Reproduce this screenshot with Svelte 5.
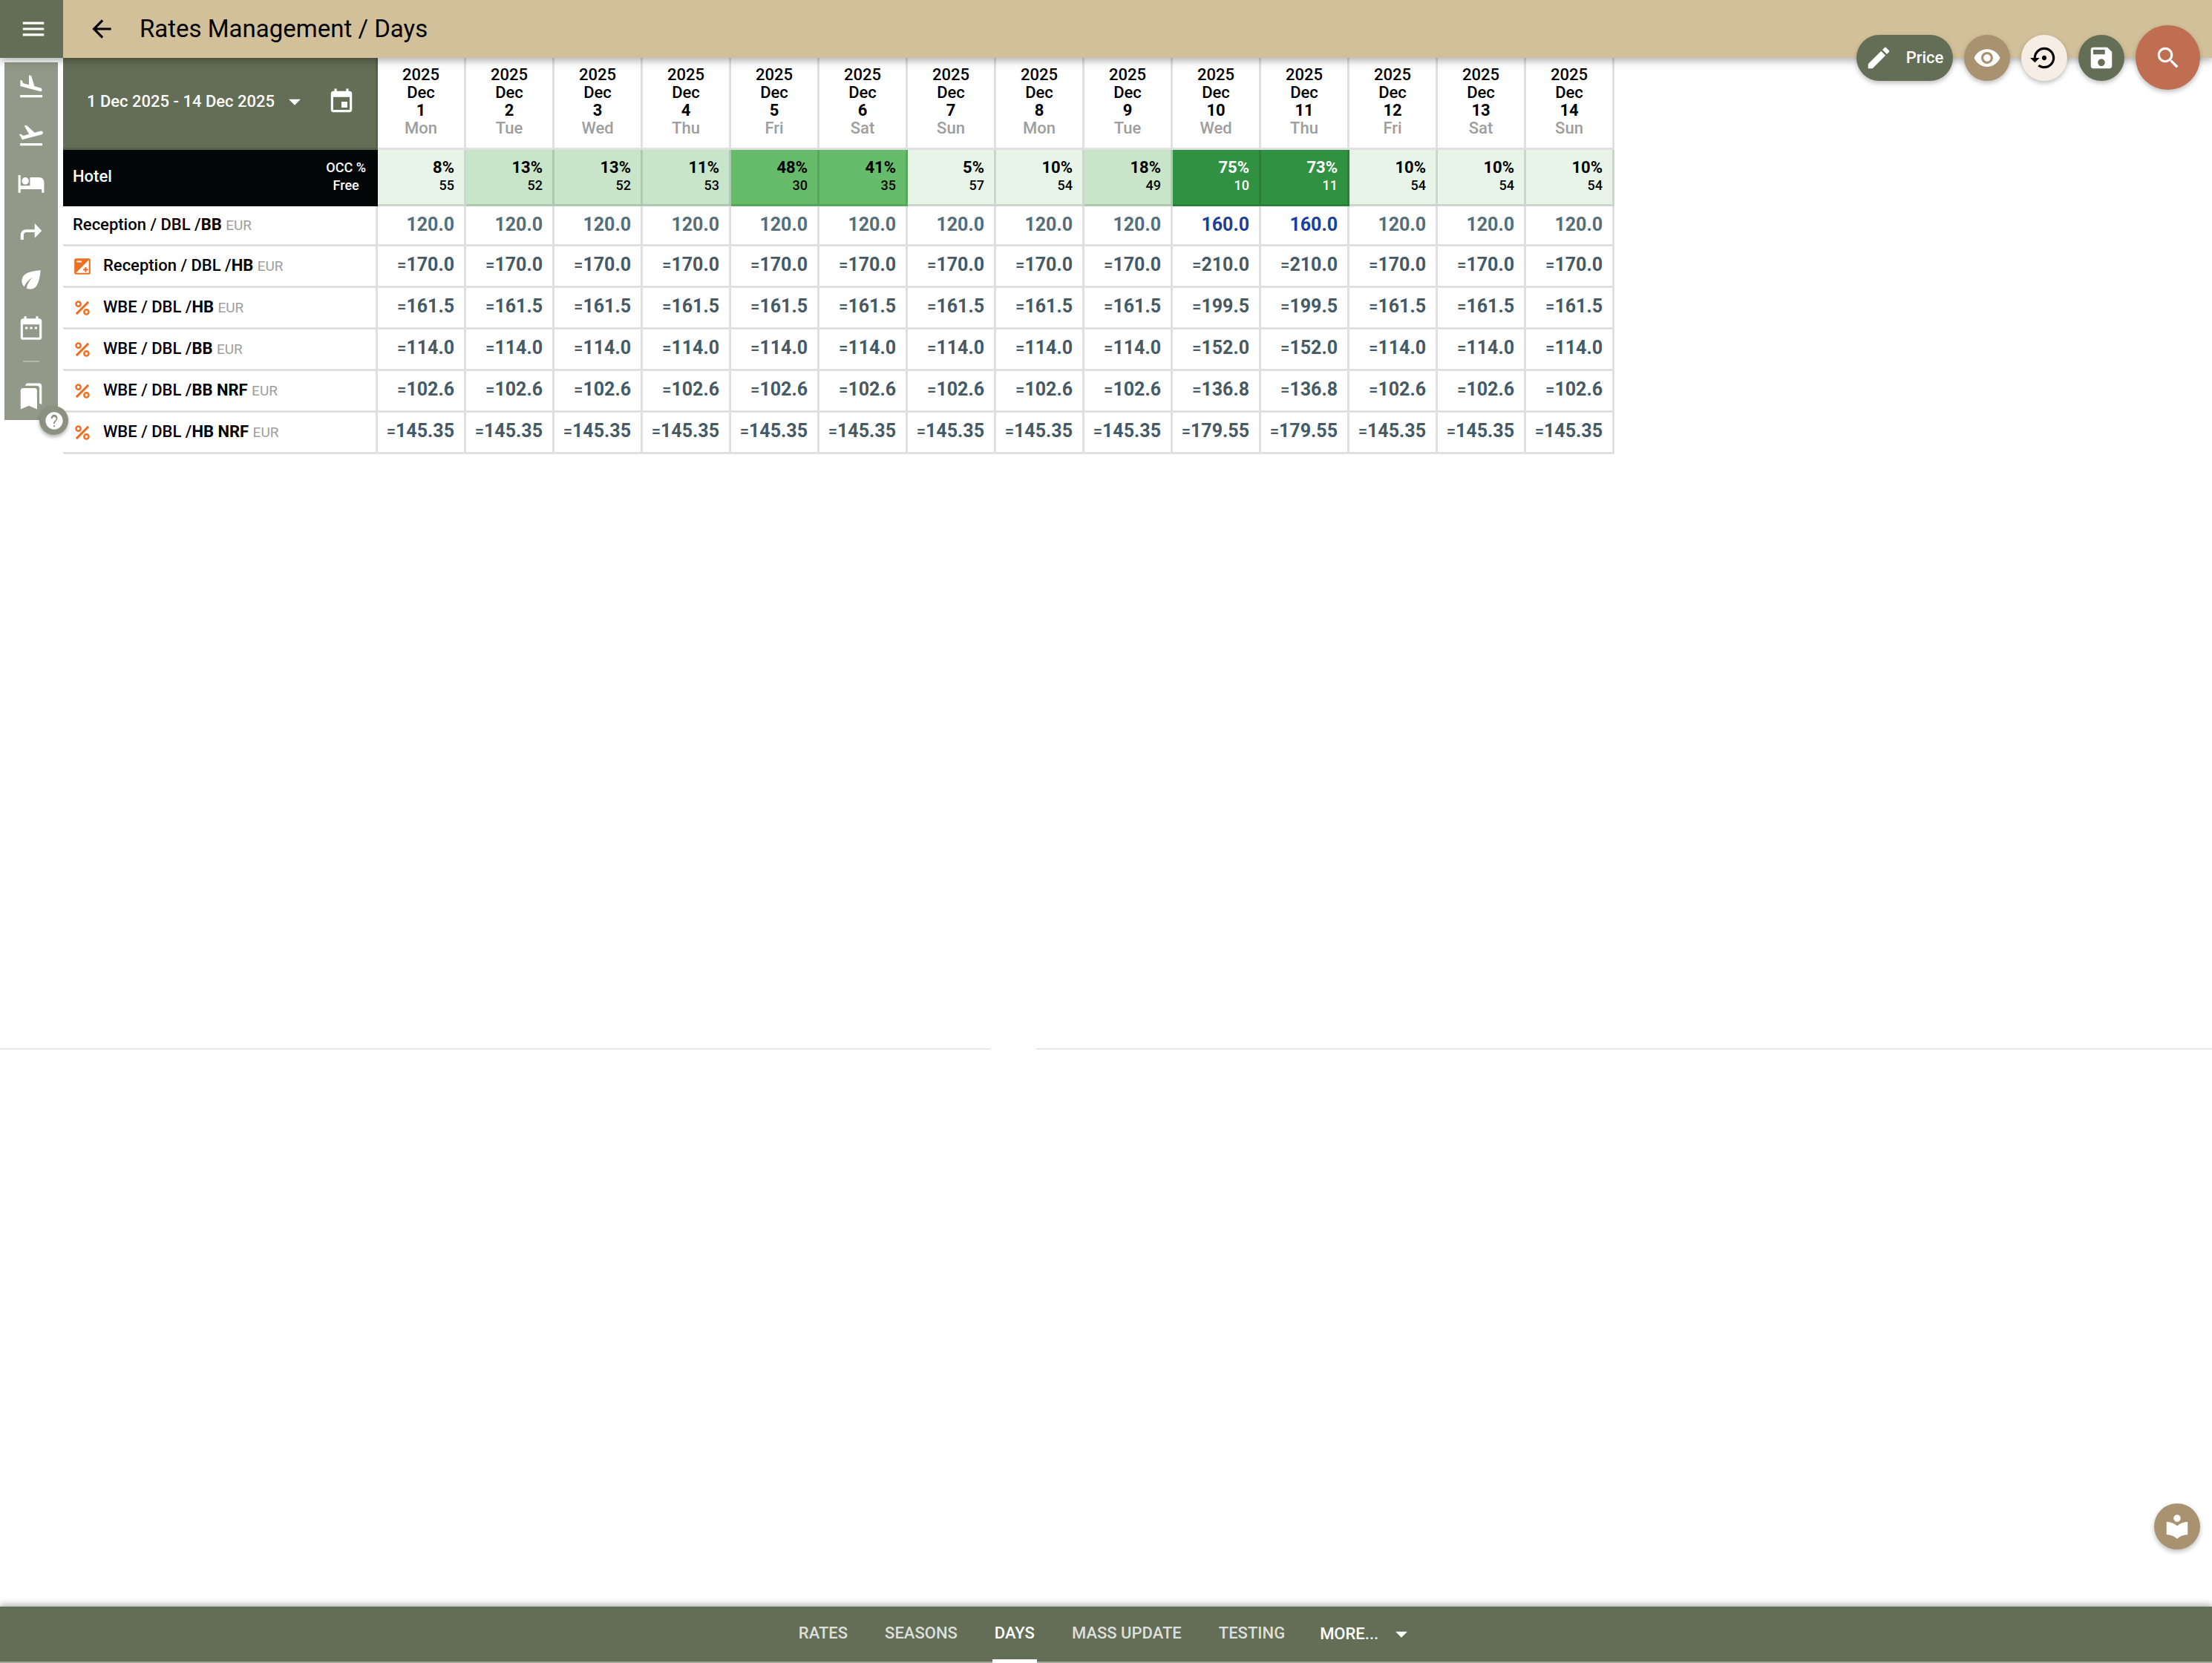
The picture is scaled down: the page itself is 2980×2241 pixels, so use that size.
<script>
  const weekdays = ['Mon', 'Tue', 'Wed', 'Thu', 'Fri', 'Sat', 'Sun'];
  const occupancy = [
    [8, 55], [13, 52], [13, 52], [11, 53], [48, 30], [41, 35], [5, 57],
    [10, 54], [18, 49], [75, 10], [73, 11], [10, 54], [10, 54], [10, 54]
  ];
  const level = (occ) => (occ > 60 ? 'full' : occ > 30 ? 'high' : occ > 10 ? 'mid' : 'low');
  const days = occupancy.map(([occ, free], i) => ({
    date: i + 1,
    weekday: weekdays[i % 7],
    occ,
    free,
    peak: occ > 60,
    level: level(occ)
  }));

  const rates = [
    { name: 'Reception / DBL /', board: 'BB', icon: null, base: '120.0', peak: '160.0' },
    { name: 'Reception / DBL /', board: 'HB', icon: 'exposure', base: '170.0', peak: '210.0' },
    { name: 'WBE / DBL /', board: 'HB', icon: 'percent', base: '161.5', peak: '199.5' },
    { name: 'WBE / DBL /', board: 'BB', icon: 'percent', base: '114.0', peak: '152.0' },
    { name: 'WBE / DBL /', board: 'BB NRF', icon: 'percent', base: '102.6', peak: '136.8' },
    { name: 'WBE / DBL /', board: 'HB NRF', icon: 'percent', base: '145.35', peak: '179.55' }
  ];

  const tabs = ['Rates', 'Seasons', 'Days', 'Mass update', 'Testing'];

  const shortcuts = [
    { label: 'Arrivals', icon: 'landing' },
    { label: 'Departures', icon: 'takeoff' },
    { label: 'Rooms', icon: 'bed' },
    { label: 'Forward', icon: 'turn' },
    { label: 'Housekeeping', icon: 'leaf' },
    { label: 'Calendar', icon: 'range' }
  ];

  const paths = {
    menu: 'M3 18h18v-2H3v2zm0-5h18v-2H3v2zm0-7v2h18V6H3z',
    back: 'M20 11H7.83l5.59-5.59L12 4l-8 8 8 8 1.41-1.41L7.83 13H20v-2z',
    landing:
      'M2.5 19h19v2h-19v-2zm7.18-5.73l4.35 1.16 5.31 1.42c.8.21 1.62-.26 1.84-1.06.21-.8-.26-1.62-1.06-1.84l-5.31-1.42-2.76-9.02L10.12 2v8.28L5.15 8.95l-.93-2.32-1.45-.39v5.17l1.6.43 5.31 1.43z',
    takeoff:
      'M2.5 19h19v2h-19v-2zm19.57-9.36c-.21-.8-1.04-1.28-1.84-1.06L14.92 10l-6.9-6.43-1.93.51 4.14 7.17-4.97 1.33-1.97-1.54-1.45.39 1.82 3.16.77 1.33 1.6-.43 5.31-1.42 4.35-1.16L21 11.49c.81-.23 1.28-1.05 1.07-1.85z',
    bed: 'M7 13c1.66 0 3-1.34 3-3S8.66 7 7 7s-3 1.34-3 3 1.34 3 3 3zm12-6h-8v7H3V5H1v15h2v-3h18v3h2v-9c0-2.21-1.79-4-4-4z',
    turn: 'M3 19V15C3 12.2 5 10.3 7.8 10.3H15V5L21 11.3L15 17.5V12.7H8C6.5 12.7 5.6 13.6 5.6 15V19Z',
    leaf: 'M6.05 8.05a7.001 7.001 0 0 0-.02 9.88c1.47-3.4 4.09-6.24 7.36-7.93A15.952 15.952 0 0 0 8 19.32c2.6 1.23 5.8.78 7.95-1.37C19.43 14.47 20 4 20 4S9.53 4.57 6.05 8.05z',
    range:
      'M9 11H7v2h2v-2zm4 0h-2v2h2v-2zm4 0h-2v2h2v-2zm2-7h-1V2h-2v2H8V2H6v2H5c-1.11 0-1.99.9-1.99 2L3 20c0 1.1.89 2 2 2h14c1.1 0 2-.9 2-2V6c0-1.1-.9-2-2-2zm0 16H5V9h14v11z',
    bookmarks:
      'M19 18l2 1V3c0-1.1-.9-2-2-2H8.99C7.89 1 7 1.9 7 3h10c1.1 0 2 .9 2 2v13zM15 5H5c-1.1 0-2 .9-2 2v16l7-3 7 3V7c0-1.1-.9-2-2-2z',
    event:
      'M17 12h-5v5h5v-5zM16 1v2H8V1H6v2H5c-1.11 0-1.99.9-1.99 2L3 19c0 1.1.89 2 2 2h14c1.1 0 2-.9 2-2V5c0-1.1-.9-2-2-2h-1V1h-2zm3 18H5V8h14v11z',
    down: 'M7 10l5 5 5-5z',
    pencil:
      'M3 17.25V21h3.75L17.81 9.94l-3.75-3.75L3 17.25zM20.71 7.04c.39-.39.39-1.02 0-1.41l-2.34-2.34c-.39-.39-1.02-.39-1.41 0l-1.83 1.83 3.75 3.75 1.83-1.83z',
    eye: 'M12 4.5C7 4.5 2.73 7.61 1 12c1.73 4.39 6 7.5 11 7.5s9.27-3.11 11-7.5c-1.73-4.39-6-7.5-11-7.5zM12 17c-2.76 0-5-2.24-5-5s2.24-5 5-5 5 2.24 5 5-2.24 5-5 5zm0-8c-1.66 0-3 1.34-3 3s1.34 3 3 3 3-1.34 3-3-1.34-3-3-3z',
    restore:
      'M14 12c0-1.1-.9-2-2-2s-2 .9-2 2 .9 2 2 2 2-.9 2-2zm-2-9c-4.97 0-9 4.03-9 9H0l4 4 4-4H5c0-3.87 3.13-7 7-7s7 3.13 7 7-3.13 7-7 7c-1.51 0-2.91-.49-4.06-1.3l-1.42 1.44C8.04 20.3 9.94 21 12 21c4.97 0 9-4.03 9-9s-4.03-9-9-9z',
    save: 'M17 3H5c-1.11 0-2 .9-2 2v14c0 1.1.89 2 2 2h14c1.1 0 2-.9 2-2V7l-4-4zm-5 16c-1.66 0-3-1.34-3-3s1.34-3 3-3 3 1.34 3 3-1.34 3-3 3zm3-10H5V5h10v4z',
    search:
      'M15.5 14h-.79l-.28-.27C15.41 12.59 16 11.11 16 9.5 16 5.91 13.09 3 9.5 3S3 5.91 3 9.5 5.91 16 9.5 16c1.61 0 3.09-.59 4.23-1.57l.27.28v.79l5 4.99L20.49 19l-4.99-5zm-6 0C7.01 14 5 11.99 5 9.5S7.01 5 9.5 5 14 7.01 14 9.5 11.99 14 9.5 14z',
    library:
      'M12 11.55C9.64 9.35 6.48 8 3 8v11c3.48 0 6.64 1.35 9 3.55 2.36-2.19 5.52-3.55 9-3.55V8c-3.48 0-6.64 1.35-9 3.55zM12 8c1.66 0 3-1.34 3-3s-1.34-3-3-3-3 1.34-3 3 1.34 3 3 3z',
    help: 'M12 2C6.48 2 2 6.48 2 12s4.48 10 10 10 10-4.48 10-10S17.52 2 12 2zm.8 17h-1.6v-1.6h1.6V19zm1.9-7.2l-.8.8c-.7.75-1.1 1.4-1.1 2.9h-1.6v-.4c0-1.1.45-2.1 1.2-2.8l1.2-1.25c.4-.3.6-.8.6-1.35 0-1.2-1-2.1-2.2-2.1s-2.2.9-2.2 2.1H8.2C8.2 6.6 9.9 5 12 5s3.8 1.6 3.8 3.7c0 1-.4 1.9-1.1 3.1z',
    exposure:
      'M15 17v2h2v-2h2v-2h-2v-2h-2v2h-2v2h2zm5-15H4c-1.1 0-2 .9-2 2v16c0 1.1.9 2 2 2h16c1.1 0 2-.9 2-2V4c0-1.1-.9-2-2-2zM5 5h6v2H5V5zm15 15H4L20 4v16z',
    percent:
      'M18.5 3.5L20.5 5.5L5.5 20.5L3.5 18.5ZM7 3a4 4 0 1 0 0 8a4 4 0 0 0 0-8zm0 2.3a1.7 1.7 0 1 1 0 3.4a1.7 1.7 0 0 1 0-3.4zM17 13a4 4 0 1 0 0 8a4 4 0 0 0 0-8zm0 2.3a1.7 1.7 0 1 1 0 3.4a1.7 1.7 0 0 1 0-3.4z'
  };
</script>

{#snippet icon(name)}
  <svg class="icon" viewBox="0 0 24 24" aria-hidden="true"><path d={paths[name]} /></svg>
{/snippet}

<div class="app">
  <header>
    <button class="menu" aria-label="Menu">{@render icon('menu')}</button>
    <button class="back" aria-label="Back">{@render icon('back')}</button>
    <h1>Rates Management / Days</h1>
    <div class="actions">
      <button class="fab green wide">{@render icon('pencil')}<span>Price</span></button>
      <button class="fab tan" aria-label="View">{@render icon('eye')}</button>
      <button class="fab cream" aria-label="Restore">{@render icon('restore')}</button>
      <button class="fab green" aria-label="Save">{@render icon('save')}</button>
      <button class="fab coral large" aria-label="Search">{@render icon('search')}</button>
    </div>
  </header>

  <div class="content">
    <nav class="side" aria-label="Shortcuts">
      {#each shortcuts as item}
        <a href="#{item.icon}" aria-label={item.label}>{@render icon(item.icon)}</a>
      {/each}
      <hr />
      <a href="#bookmarks" aria-label="Bookmarks">{@render icon('bookmarks')}</a>
      <button class="help" aria-label="Help">{@render icon('help')}</button>
    </nav>

    <table>
      <colgroup>
        <col class="name-col" />
        {#each days as day (day.date)}<col class="day-col" />{/each}
      </colgroup>
      <thead>
        <tr>
          <th class="period">
            <div class="period-bar">
              <button class="range">1 Dec 2025 - 14 Dec 2025{@render icon('down')}</button>
              <button class="pick" aria-label="Pick dates">{@render icon('event')}</button>
            </div>
          </th>
          {#each days as day (day.date)}
            <th class="day">
              <div>2025</div>
              <div>Dec</div>
              <div class="date">{day.date}</div>
              <div class="weekday">{day.weekday}</div>
            </th>
          {/each}
        </tr>
      </thead>
      <tbody>
        <tr class="hotel">
          <th>
            <div class="hotel-bar">
              <span>Hotel</span>
              <span class="legend"><span>OCC %</span><span>Free</span></span>
            </div>
          </th>
          {#each days as day (day.date)}
            <td class={day.level}>
              <div class="occ">{day.occ}%</div>
              <div class="free">{day.free}</div>
            </td>
          {/each}
        </tr>
        {#each rates as rate}
          <tr class="rate">
            <th>
              <div class="rate-name">
                {#if rate.icon}<span class="mark">{@render icon(rate.icon)}</span>{/if}
                <span>{rate.name}<b>{rate.board}</b> <small>EUR</small></span>
              </div>
            </th>
            {#each days as day (day.date)}
              <td class:derived={rate.icon} class:override={!rate.icon && day.peak}>
                {#if rate.icon}<i>=</i>{/if}{day.peak ? rate.peak : rate.base}
              </td>
            {/each}
          </tr>
        {/each}
      </tbody>
    </table>
  </div>

  <div class="upper"></div>
  <div class="rule"><hr class="rule-left" /><hr class="rule-right" /></div>
  <div class="lower">
    <button class="fab tan" aria-label="Guide">{@render icon('library')}</button>
  </div>

  <nav class="tabs" aria-label="Sections">
    {#each tabs as tab}
      <a href="#{tab.toLowerCase().replace(' ', '-')}" class:active={tab === 'Days'}>{tab}</a>
    {/each}
    <button class="more">More...{@render icon('down')}</button>
  </nav>
</div>

<style>
  :global(body) {
    background: #fff;
  }
  .app {
    display: flex;
    flex-direction: column;
    min-height: 100vh;
    font-family: Roboto, sans-serif;
    font-size: 22px;
    line-height: 24px;
    font-weight: 500;
    color: #000;
  }
  button {
    display: flex;
    align-items: center;
    justify-content: center;
    border: 0;
    padding: 0;
    background: none;
    color: inherit;
    font: inherit;
    text-transform: inherit;
    cursor: pointer;
  }
  .icon {
    display: block;
    flex: none;
    width: 38px;
    height: 38px;
    fill: currentColor;
  }

  header {
    position: relative;
    z-index: 2;
    display: flex;
    align-items: center;
    height: 78px;
    background: #d2c09a;
    box-shadow: 0 4px 8px rgba(0, 0, 0, 0.2), 0 2px 18px rgba(0, 0, 0, 0.14);
  }
  .menu {
    width: 85px;
    height: 78px;
    padding-left: 4px;
    background: #646e56;
    color: #fff;
  }
  .back {
    width: 103px;
    height: 78px;
  }
  h1 {
    margin: 0;
    font-size: 33px;
    line-height: 40px;
    font-weight: 400;
  }
  .actions {
    position: absolute;
    right: 16px;
    top: 34px;
    display: flex;
    align-items: center;
    gap: 15px;
  }
  .fab {
    width: 62px;
    height: 62px;
    border-radius: 50%;
    color: #fff;
    box-shadow: 0 3px 6px rgba(0, 0, 0, 0.26);
  }
  .fab.wide {
    width: 130px;
    gap: 18px;
    padding-right: 2px;
    border-radius: 31px;
  }
  .fab.large {
    width: 87px;
    height: 87px;
  }
  .green {
    background: #646e56;
  }
  .tan {
    background: #a99270;
  }
  .cream {
    background: #f6eee5;
    color: #000;
  }
  .coral {
    background: #c06e52;
  }

  .content {
    display: flex;
    align-items: flex-start;
  }
  .side {
    position: relative;
    flex: none;
    display: flex;
    flex-direction: column;
    width: 72px;
    margin: 6px 7px 0 6px;
    background: #929988;
    color: #fff;
  }
  .side a {
    display: flex;
    align-items: center;
    justify-content: center;
    height: 65px;
    color: inherit;
  }
  .side hr {
    width: 22px;
    height: 2px;
    margin: 12px auto 13px;
    border: 0;
    background: #b4b8ac;
  }
  .help {
    position: absolute;
    right: -14px;
    bottom: -20px;
    width: 39px;
    height: 39px;
    border-radius: 50%;
    background: #8a917e;
    box-shadow: 0 3px 5px rgba(0, 0, 0, 0.3);
  }
  .help .icon {
    width: 28px;
    height: 28px;
  }

  table {
    flex: none;
    width: 2090px;
    table-layout: fixed;
    border-collapse: separate;
    border-spacing: 0;
  }
  .name-col {
    width: 424px;
  }
  .day-col {
    width: 119px;
  }
  th,
  td {
    box-sizing: border-box;
    padding: 0;
    border: solid rgba(0, 0, 0, 0.12);
    border-width: 0 3px 3px 0;
    font-weight: 500;
  }
  .period {
    height: 124px;
    background: #646e56;
    color: #fff;
  }
  .period-bar {
    display: flex;
    align-items: center;
    justify-content: space-between;
    padding: 0 27px 3px 32px;
  }
  .range .icon {
    margin-left: 8px;
  }
  .day {
    padding-top: 11px;
    vertical-align: top;
    text-align: center;
  }
  .date {
    font-weight: 700;
  }
  .weekday {
    color: #9e9e9e;
  }

  .hotel th {
    height: 76px;
    background: #020606;
    color: #fff;
    border-color: #020606;
  }
  .hotel-bar {
    display: flex;
    align-items: center;
    justify-content: space-between;
    padding: 0 13px 1px;
  }
  .legend {
    display: flex;
    flex-direction: column;
    align-items: center;
    font-size: 18px;
  }
  td {
    padding-right: 13px;
    text-align: right;
  }
  .hotel td {
    padding-bottom: 2px;
  }
  .occ {
    font-weight: 700;
  }
  .free {
    font-size: 18px;
  }
  .low {
    background: #e9f4e9;
  }
  .mid {
    background: #c8e5c9;
  }
  .high {
    background: #66bc6a;
  }
  .full {
    background: #319143;
    color: #fff;
  }

  .rate th {
    height: 56px;
    text-align: left;
  }
  .hotel + .rate th {
    height: 54px;
  }
  .rate-name {
    display: flex;
    align-items: center;
    padding-left: 13px;
  }
  .mark {
    width: 41px;
    color: #ee7023;
  }
  .mark .icon {
    width: 26px;
    height: 26px;
  }
  small {
    font-size: 19px;
    font-weight: 400;
    color: #9e9e9e;
  }
  .rate td {
    padding-bottom: 2px;
    font-size: 25px;
    font-weight: 700;
    color: #546e7a;
  }
  .rate .derived {
    color: #455a64;
  }
  .rate .override {
    color: #1a3f9c;
  }
  i {
    font-size: 22px;
    font-style: normal;
    font-weight: 500;
  }

  .upper {
    flex: 17;
  }
  .rule {
    display: flex;
    gap: 62px;
  }
  .rule hr {
    height: 1px;
    margin: 0;
    border: 0;
    background: #d6d6d6;
  }
  .rule-left {
    flex: 1334;
  }
  .rule-right {
    flex: 1584;
  }
  .lower {
    flex: 13;
    display: flex;
    align-items: flex-end;
    justify-content: flex-end;
    padding: 0 16px 77px;
  }

  .tabs {
    display: flex;
    justify-content: center;
    gap: 44px;
    height: 74px;
    border-bottom: 2px solid #a3a89b;
    background: #646e56;
    color: #fff;
    text-transform: uppercase;
    box-shadow: 0 -3px 8px rgba(0, 0, 0, 0.3);
  }
  .tabs a {
    display: flex;
    align-items: center;
    height: 71px;
    padding: 0 3px;
    border-bottom: 5px solid transparent;
    color: #dddfda;
    text-decoration: none;
  }
  .tabs .active {
    border-color: #fff;
    color: #fff;
  }
  .more .icon {
    margin-left: 12px;
  }
</style>
